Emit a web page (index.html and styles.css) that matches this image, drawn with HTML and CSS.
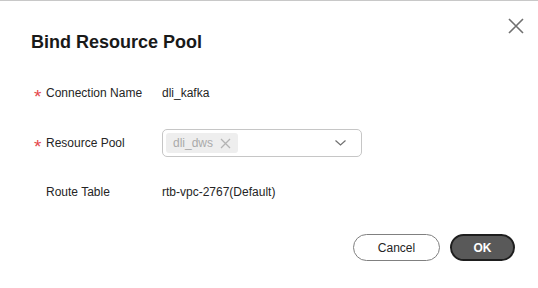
FILE: index.html
```html
<!DOCTYPE html>
<html lang="en">
<head>
    <meta charset="UTF-8">
    <meta name="viewport" content="width=device-width, initial-scale=1.0">
    <title>Bind Resource Pool</title>
    <link rel="stylesheet" href="styles.css">
</head>
<body>
    <div class="dialog">
        <div class="dialog-header">
            <h2>Bind Resource Pool</h2>
            <button class="close-btn" title="Close">
                <svg width="16" height="16" viewBox="0 0 16 16">
                    <path d="M1 1 L15 15 M15 1 L1 15" stroke="#707070" stroke-width="1.6" fill="none"/>
                </svg>
            </button>
        </div>

        <div class="form">
            <div class="form-row row-first">
                <label><span class="req">*</span>Connection Name</label>
                <div class="value">dli_kafka</div>
            </div>
            <div class="form-row row-pool">
                <label><span class="req">*</span>Resource Pool</label>
                <div class="select">
                    <span class="tag">dli_dws
                        <svg width="11" height="11" viewBox="0 0 11 11">
                            <path d="M1 1 L10 10 M10 1 L1 10" stroke="#b4b4b4" stroke-width="1.3" fill="none"/>
                        </svg>
                    </span>
                    <svg class="chevron" width="11" height="6" viewBox="0 0 11 6">
                        <path d="M0.5 0.5 L5.5 5 L10.5 0.5" stroke="#707070" stroke-width="1.2" fill="none"/>
                    </svg>
                </div>
            </div>
            <div class="form-row row-route">
                <label><span class="req"></span>Route Table</label>
                <div class="value">rtb-vpc-2767(Default)</div>
            </div>
        </div>

        <div class="dialog-footer">
            <button class="btn btn-cancel">Cancel</button>
            <button class="btn btn-ok">OK</button>
        </div>
    </div>
</body>
</html>
```

FILE: styles.css
```css
body {
    font-family: "Liberation Sans", Arial, sans-serif;
    background: #ffffff;
    color: #252525;
    margin: 0;
    padding: 0;
}
.dialog {
    border-top: 1px solid #c8c8c8;
    height: 287px;
    padding: 0 14px 0 31px;
}
.dialog-header {
    display: flex;
    justify-content: space-between;
    align-items: flex-start;
    padding-top: 29px;
}
.dialog-header h2 {
    margin: 0;
    font-size: 18px;
    line-height: 24px;
    font-weight: bold;
    color: #191919;
}
.close-btn {
    background: none;
    border: none;
    padding: 0;
    margin-top: -12px;
    width: 16px;
    height: 16px;
    cursor: pointer;
    display: flex;
}
.form {
    padding-left: 3px;
}
.form-row {
    display: flex;
    align-items: center;
    height: 28px;
    font-size: 12px;
}
.row-first {
    margin-top: 25px;
}
.row-pool {
    margin-top: 22px;
}
.row-route {
    margin-top: 21px;
}
.form-row label {
    width: 128px;
    display: flex;
    align-items: center;
}
.req {
    display: inline-block;
    width: 12px;
    color: #e5484d;
    font-size: 19px;
    line-height: 12px;
    padding-top: 7px;
}
.select {
    box-sizing: border-box;
    width: 200px;
    height: 28px;
    border: 1px solid #c6c6c6;
    border-radius: 5px;
    display: flex;
    align-items: center;
    justify-content: space-between;
    padding: 0 15px 0 3px;
}
.tag {
    background: #eeeeee;
    color: #aaaaaa;
    border-radius: 3px;
    height: 20px;
    padding: 0 7px 0 7px;
    display: flex;
    align-items: center;
    gap: 7px;
}
.dialog-footer {
    display: flex;
    justify-content: flex-end;
    gap: 10px;
    margin-top: 28px;
    padding-right: 9px;
}
.btn {
    font-family: "Liberation Sans", Arial, sans-serif;
    font-size: 12px;
    height: 27px;
    border-radius: 14px;
    cursor: pointer;
}
.btn-cancel {
    width: 87px;
    background: #ffffff;
    border: 1px solid #808080;
    color: #252525;
}
.btn-ok {
    width: 65px;
    background: #595959;
    border: 2px solid #1e1e1e;
    color: #ffffff;
    font-weight: bold;
}
```
